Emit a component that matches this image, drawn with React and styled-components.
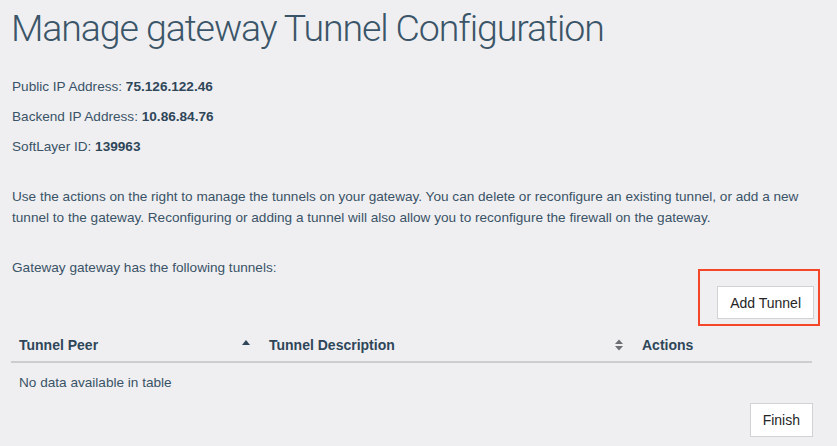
import React from "react";
import styled, { createGlobalStyle } from "styled-components";

const Global = createGlobalStyle`
  html, body {
    margin: 0;
    padding: 0;
    background: #efeff2;
  }
  body {
    font-family: "Liberation Sans", Arial, sans-serif;
    color: #3a5366;
  }
`;

const Page = styled.div`
  padding: 0 23px 0 11px;
  display: flex;
  flex-direction: column;
  width: 803px;
`;

const Title = styled.h1`
  margin: 6px 0 0 0;
  font-family: Roboto, "Liberation Sans", sans-serif;
  font-weight: 300;
  font-size: 37.5px;
  line-height: 44px;
  color: #3b5568;
  letter-spacing: -1.1px;
  white-space: nowrap;
`;

const InfoList = styled.div`
  margin-top: 27px;
  display: flex;
  flex-direction: column;
  gap: 10px;
`;

const InfoLine = styled.div`
  font-size: 13.6px;
  line-height: 20px;
  padding-left: 1px;
  strong {
    font-weight: 700;
    color: #2e4658;
  }
`;

const Paragraph = styled.p`
  margin: ${(p) => p.$mt || 0}px 0 0 0;
  font-size: 13.6px;
  line-height: 21px;
  padding-left: 1px;
`;

const ButtonRow = styled.div`
  display: flex;
  justify-content: flex-end;
  margin-top: ${(p) => p.$mt}px;
  padding-right: ${(p) => p.$pr || 0}px;
`;

const Highlight = styled.div`
  position: relative;
  &::after {
    content: "";
    position: absolute;
    left: -19px;
    right: -6px;
    top: -17px;
    bottom: -7px;
    border: 2px solid #f4472a;
    pointer-events: none;
  }
`;

const Button = styled.button`
  font-family: "Liberation Sans", Arial, sans-serif;
  font-size: 14px;
  color: #252525;
  background: #ffffff;
  border: 1px solid #d2d2d4;
  height: ${(p) => p.$h}px;
  padding: 0 ${(p) => p.$px}px;
  cursor: pointer;
  border-radius: 0;
`;

const Table = styled.table`
  margin-top: 9px;
  width: 801px;
  border-collapse: collapse;
  table-layout: fixed;
`;

const Th = styled.th`
  position: relative;
  text-align: left;
  font-weight: 700;
  font-size: 14px;
  color: #2e4658;
  height: 34px;
  padding: 0 8px;
  border-bottom: 2px solid #cdcdd0;
  box-sizing: border-box;
`;

const SortIcon = styled.svg`
  position: absolute;
  right: 11px;
  top: 50%;
  transform: translateY(-50%);
`;

const Td = styled.td`
  font-size: 13.6px;
  line-height: 20px;
  padding: 10px 8px 8px;
`;

const SortUp = () => (
  <SortIcon width="8" height="12" viewBox="0 0 8 12">
    <path d="M0 6 L4 1 L8 6 Z" fill="#2f4759" />
  </SortIcon>
);

const SortBoth = () => (
  <SortIcon width="8" height="12" viewBox="0 0 8 12">
    <path d="M0 5 L4 0.5 L8 5 Z" fill="#6b6f73" />
    <path d="M0 7 L4 11.5 L8 7 Z" fill="#6b6f73" />
  </SortIcon>
);

export default function App() {
  return (
    <>
      <Global />
      <Page>
        <Title>Manage gateway Tunnel Configuration</Title>
        <InfoList>
          <InfoLine>
            Public IP Address: <strong>75.126.122.46</strong>
          </InfoLine>
          <InfoLine>
            Backend IP Address: <strong>10.86.84.76</strong>
          </InfoLine>
          <InfoLine>
            SoftLayer ID: <strong>139963</strong>
          </InfoLine>
        </InfoList>
        <Paragraph $mt={29}>
          Use the actions on the right to manage the tunnels on your gateway. You can delete or reconfigure an existing tunnel, or add a new tunnel to the gateway. Reconfiguring or adding a tunnel will also allow you to reconfigure the firewall on the gateway.
        </Paragraph>
        <Paragraph $mt={29}>Gateway gateway has the following tunnels:</Paragraph>
        <ButtonRow $mt={8} $pr={0}>
          <Highlight>
            <Button $h={33} $px={12}>Add Tunnel</Button>
          </Highlight>
        </ButtonRow>
        <Table>
          <colgroup>
            <col style={{ width: 250 }} />
            <col style={{ width: 373 }} />
            <col style={{ width: 178 }} />
          </colgroup>
          <thead>
            <tr>
              <Th>
                Tunnel Peer
                <SortUp />
              </Th>
              <Th>
                Tunnel Description
                <SortBoth />
              </Th>
              <Th>Actions</Th>
            </tr>
          </thead>
          <tbody>
            <tr>
              <Td colSpan={3}>No data available in table</Td>
            </tr>
          </tbody>
        </Table>
        <ButtonRow $mt={2} $pr={1}>
          <Button $h={34} $px={12}>Finish</Button>
        </ButtonRow>
      </Page>
    </>
  );
}
